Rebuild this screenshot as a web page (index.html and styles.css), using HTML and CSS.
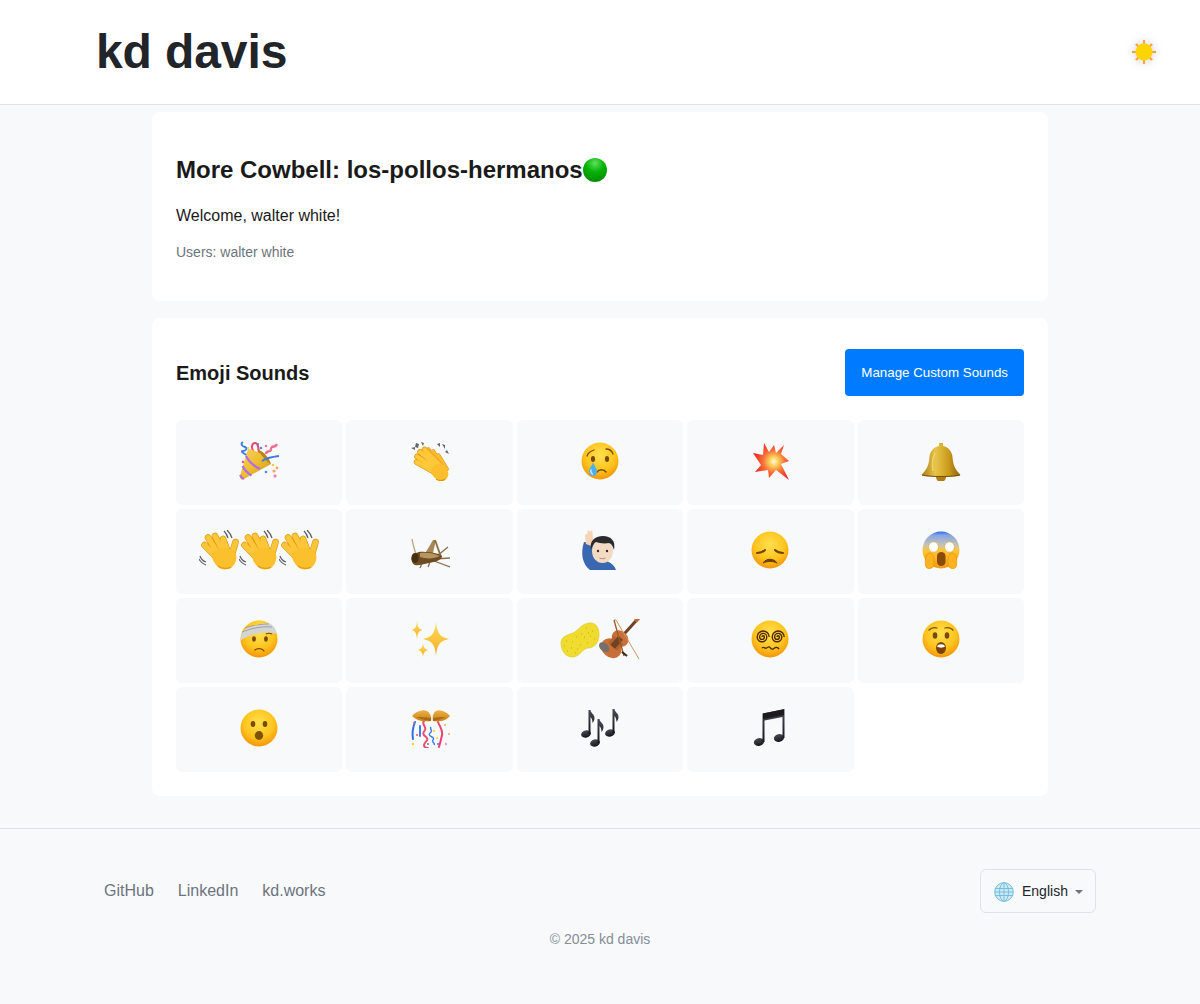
FILE: index.html
```html
<!DOCTYPE html>
<html lang="en">
<head>
    <meta charset="UTF-8">
    <meta name="viewport" content="width=device-width, initial-scale=1.0">
    <title>More Cowbell</title>
    <link rel="stylesheet" href="styles.css">
</head>
<body>
    <!-- shared gradients and emoji drawings -->
    <svg class="sprite" aria-hidden="true">
        <defs>
            <radialGradient id="faceFill" cx="50%" cy="35%" r="68%">
                <stop offset="0" stop-color="#ffe04f"/>
                <stop offset="0.6" stop-color="#fdc41e"/>
                <stop offset="0.92" stop-color="#f59a0c"/>
                <stop offset="1" stop-color="#ec8a0e"/>
            </radialGradient>
            <linearGradient id="screamFill" x1="0" y1="0" x2="0" y2="1">
                <stop offset="0" stop-color="#2a6cec"/>
                <stop offset="0.1" stop-color="#86a4e6"/>
                <stop offset="0.36" stop-color="#c4c2b4"/>
                <stop offset="0.52" stop-color="#fdc532"/>
                <stop offset="1" stop-color="#f39a12"/>
            </linearGradient>
            <linearGradient id="goldFill" x1="0" y1="0" x2="1" y2="1">
                <stop offset="0" stop-color="#f6d264"/>
                <stop offset="0.5" stop-color="#eebd2e"/>
                <stop offset="1" stop-color="#c88c18"/>
            </linearGradient>
            <linearGradient id="bellFill" x1="0" y1="0" x2="1" y2="0">
                <stop offset="0" stop-color="#a8780c"/>
                <stop offset="0.35" stop-color="#e8c54a"/>
                <stop offset="0.7" stop-color="#c99a1c"/>
                <stop offset="1" stop-color="#8c640a"/>
            </linearGradient>
            <linearGradient id="sparkFill" x1="0" y1="0" x2="0" y2="1">
                <stop offset="0" stop-color="#ffdc5a"/>
                <stop offset="1" stop-color="#f7ae26"/>
            </linearGradient>
            <linearGradient id="noteFill" x1="0" y1="0" x2="0" y2="1">
                <stop offset="0" stop-color="#4a4a55"/>
                <stop offset="1" stop-color="#15151c"/>
            </linearGradient>
            <linearGradient id="domeFill" x1="0" y1="0" x2="0" y2="1">
                <stop offset="0" stop-color="#eeb044"/>
                <stop offset="1" stop-color="#c98218"/>
            </linearGradient>
            <radialGradient id="greenFill" cx="50%" cy="22%" r="80%">
                <stop offset="0" stop-color="#5fe05f"/>
                <stop offset="0.45" stop-color="#08b408"/>
                <stop offset="1" stop-color="#048a04"/>
            </radialGradient>
            <radialGradient id="blastFill" cx="58%" cy="50%" r="55%">
                <stop offset="0" stop-color="#fffbe0"/>
                <stop offset="0.22" stop-color="#fdd25a"/>
                <stop offset="0.55" stop-color="#f7703a"/>
                <stop offset="1" stop-color="#ea2a20"/>
            </radialGradient>
        </defs>

        <symbol id="popper" viewBox="0 0 40 40">
            <path d="M4 1c-3 2-1 4 2 5s1 4-2 4 1 3 4 4" fill="none" stroke="#3c7be8" stroke-width="1.900"/>
            <path d="M17 16c-1-4-5-7-4-11s5-4 6 0 1 7 1 11" fill="none" stroke="#f0446c" stroke-width="2"/>
            <path d="M27 13c0-3 2-2 4-3s0-3 2-4 4 0 5-3" fill="none" stroke="#ee6f92" stroke-width="2.400"/>
            <path d="M1 35 9 8c8 1 19 7 23 15L4 38.600c-2 .6-3.500-1.600-3-3.600z" fill="url(#goldFill)"/>
            <path d="M18 8c6 2 12 8 14 15-3-2-6-4-8-7s-5-5-6-8z" fill="#b88418"/>
            <path d="M23 20c4-3 9-4 17-5" fill="none" stroke="#3c7be8" stroke-width="2"/>
            <path d="M7 15c3 6 8 10 14 13M3.500 25c2 4 5 7 9 9.500M1 34c1 2 2 3 4 4" fill="none" stroke="#b56ae8" stroke-width="2.200"/>
            <circle cx="4" cy="21" r="1.300" fill="#e85a80"/>
            <circle cx="22" cy="7" r="1.300" fill="#4a8ae8"/>
            <circle cx="27" cy="5" r="1.300" fill="#ee7a9a"/>
            <circle cx="19" cy="3" r="1" fill="#4a8ae8"/>
            <circle cx="9" cy="7" r="1.100" fill="#f0c84a"/>
            <circle cx="27" cy="31" r="1.300" fill="#4a8ae8"/>
            <circle cx="35" cy="30" r="1.600" fill="#f0a868"/>
            <circle cx="38" cy="27" r="1.400" fill="#f0a868"/>
            <circle cx="36" cy="35" r="1.700" fill="#f08ab0"/>
            <circle cx="34" cy="24" r="1.300" fill="#f0c84a"/>
        </symbol>

        <symbol id="clap" viewBox="0 0 40 40">
            <path d="M1 7l4-1 0 3zM6 2l3 1-1 4-3-1zM11 1l3 1-1 3zM27 3l3-1 0 4zM32 3l3 1 0 4zM37 9l2 4-4-2z" fill="#666"/>
            <g fill="none" stroke-linecap="round">
                <path d="M30 28 18 9M33 28 23 11M36 28 28 15" stroke="#e0920e" stroke-width="5.400"/>
                <path d="M30 28 18 9M33 28 23 11M36 28 28 15" stroke="#f7bc32" stroke-width="4.400"/>
                <path d="M26 32 6.500 21M26 28 7 15.500M28 25 10 11M30 24 14.500 8.500" stroke="#e0920e" stroke-width="5.600"/>
                <path d="M26 32 6.500 21M26 28 7 15.500M28 25 10 11M30 24 14.500 8.500" stroke="#fdc93a" stroke-width="4.400"/>
            </g>
            <path d="M21 28c3-5 8-6 11-5 2 2 4 5 6 8 1 2 0 6-3 8-3 1-6 0-8-1-4-2-7-6-6-10z" fill="#fbbf2e"/>
            <path d="M26 38c3 2 7 2 9 0" fill="none" stroke="#e8960c" stroke-width="1.500"/>
        </symbol>

        <symbol id="wave" viewBox="0 0 40 40">
            <path d="M25 1c2 2 3 4 4 7M28 0c2 2 4 5 5 8M1 26c1 3 3 5 6 6M0 29c1 2 4 5 7 6" fill="none" stroke="#5f5f5f" stroke-width="1.300"/>
            <g fill="none" stroke-linecap="round">
                <path d="M20 30 5.500 15M20 25 9 7.500M25 23 16 6M29 22 24 9M32 28 36.500 12" stroke="#e0920e" stroke-width="6.600"/>
                <path d="M20 30 5.500 15M20 25 9 7.500M25 23 16 6M29 22 24 9M32 28 36.500 12" stroke="#fcc63a" stroke-width="5.400"/>
            </g>
            <path d="M13 23c5-6 18-7 23-1 3 5 1 12-4 16-4 2-10 2-13-1s-7-8-6-14z" fill="#fac02e"/>
            <path d="M19 36c4 3 10 3 13 1" fill="none" stroke="#ea9a10" stroke-width="1.400"/>
        </symbol>

        <symbol id="cry" viewBox="0 0 40 40">
            <circle cx="20" cy="20" r="18.500" fill="url(#faceFill)"/>
            <path d="M7 15c1-3 4-5 7-6M26 8c3 0 6 2 7 5" fill="none" stroke="#7a4a0a" stroke-width="1.300" stroke-linecap="round"/>
            <ellipse cx="13" cy="18" rx="2.100" ry="3" fill="#7a4a0a"/>
            <ellipse cx="27" cy="18" rx="2.100" ry="3" fill="#7a4a0a"/>
            <path d="M17 31c2-3 7-3 9 0" fill="none" stroke="#7a4a0a" stroke-width="1.500" stroke-linecap="round"/>
            <path d="M13 21c-1 4-4 6-4 9.500 0 3 2 4.500 4 4.500s4-1.500 4-4.500c0-3.500-3-5.500-4-9.500z" fill="#4fb0ee"/>
            <path d="M11 29c-.5 2 0 3 1.500 4" fill="none" stroke="#d5f0fd" stroke-width="1.300" stroke-linecap="round"/>
        </symbol>

        <symbol id="blast" viewBox="0 0 40 40">
            <path d="M14 2 19 11 24 4 26 12 34 4 31 13 39 20 31 23 39 39 26 29 19 37 18 29 5 31 11 24 3 12 13 14z" fill="url(#blastFill)"/>
        </symbol>

        <symbol id="bell" viewBox="0 0 40 40">
            <circle cx="20" cy="36" r="5" fill="#b07c14"/>
            <path d="M18 2h4v3c5 1 9 5 9.500 11 .5 8 3 13 8 18-5 2.500-34 2.500-39 0 5-5 7.500-10 8-18C9 10 13 6 18 5z" fill="url(#bellFill)"/>
            <path d="M1 34c6 2 32 2 38 0" fill="none" stroke="#6f4e08" stroke-width="1"/>
            <path d="M12 30c-1-6 0-14 2-18" fill="none" stroke="#f3dc7c" stroke-width="1.500" opacity=".8"/>
        </symbol>

        <symbol id="scream" viewBox="0 0 40 40">
            <circle cx="20" cy="20" r="18.500" fill="url(#screamFill)"/>
            <ellipse cx="12.500" cy="17" rx="5" ry="5.200" fill="#fff" stroke="#d9a23a" stroke-width=".6"/>
            <ellipse cx="28.500" cy="17" rx="5" ry="5.200" fill="#fff" stroke="#d9a23a" stroke-width=".6"/>
            <rect x="16" y="22" width="8.500" height="14" rx="4.200" fill="#8a4a0c"/>
            <path d="M5 26c1-3 5-4 6-2 2 3 3 9 1 13-2 2-6 2-7 0-1-3-1-8 0-11z" fill="#fbb420" stroke="#ea8f10" stroke-width=".7"/>
            <path d="M35 26c-1-3-5-4-6-2-2 3-3 9-1 13 2 2 6 2 7 0 1-3 1-8 0-11z" fill="#fbb420" stroke="#ea8f10" stroke-width=".7"/>
        </symbol>

        <symbol id="cricket" viewBox="0 0 40 40">
            <path d="M2 9c1 5 2 10 4 15" fill="none" stroke="#b8a688" stroke-width="1.300"/>
            <path d="M13 27 23 10 26 10 22 27z" fill="#a5875a"/>
            <path d="M25 10 31 27" fill="none" stroke="#8a6c3e" stroke-width="1.800"/>
            <path d="M27 26 38 17M24 29 40 28M24 31 40 37M13 31 10 38M20 32 18 37" fill="none" stroke="#85704f" stroke-width="1.300"/>
            <path d="M2 27c3-5 8-6 13-5 6 0 13 1 17 4 0 4-7 6-13 7-6 1-11 3-14 2-3-1-4-5-3-8z" fill="#6e4c24"/>
            <path d="M10 23c6-1 14 0 20 3-6 3-14 3-20 1z" fill="#b8955f"/>
            <ellipse cx="5" cy="28" rx="3.600" ry="5" fill="#47300f"/>
        </symbol>

        <symbol id="raise" viewBox="0 0 40 40">
            <path d="M4 12 15 13c-3 6-3 12 0 16 8 0 19 3 21 11H10C3 35 0 24 4 12z" fill="#3a68b0"/>
            <path d="M6 14 5 6c0-2 1-3 2-1l.5-3c.5-2 2-2 2.500 0l.5-1c1-1 2 0 2 1l.5 8c2-1 2 2 0 4l-2 2z" fill="#f5d5b5"/>
            <ellipse cx="22.500" cy="21" rx="10.500" ry="12" fill="#f3dac2"/>
            <path d="M11 20c-2-9 4-14 12-14s13 5 11 14c-1-3-2-6-5-7-5 1-10 0-13-1-2 1-4 4-5 8z" fill="#2b2b2e"/>
            <circle cx="18" cy="21" r="1.200" fill="#3a2a20"/>
            <circle cx="27" cy="21" r="1.200" fill="#3a2a20"/>
            <path d="M19.500 28c2 1 4 1 6 0" fill="none" stroke="#b58a70" stroke-width="1"/>
        </symbol>

        <symbol id="sad" viewBox="0 0 40 40">
            <circle cx="20" cy="20" r="18.500" fill="url(#faceFill)"/>
            <path d="M7 23c3 0 6-1 8-3M33 23c-3 0-6-1-8-3" fill="none" stroke="#6e4208" stroke-width="2" stroke-linecap="round"/>
            <path d="M13 33c3-5 11-5 14 0-4-2-10-2-14 0z" fill="#6e4208" stroke="#6e4208" stroke-width="1" stroke-linejoin="round"/>
        </symbol>

        <symbol id="bandage" viewBox="0 0 40 40">
            <circle cx="20" cy="20" r="18.500" fill="url(#faceFill)"/>
            <path d="M2 21C1 12 8 8 14 7c6-3 14-5 19-1 3 2 4 5 5 9-8-3-24-2-36 6z" fill="#d4d4d4"/>
            <path d="M3 13c8-3 18-6 30-5M6 9c6-2 12-4 24-4" fill="none" stroke="#a0a0a0" stroke-width="1"/>
            <path d="M17 2c4-1 9 0 12 2-5 0-10 1-14 3z" fill="#fcd22e"/>
            <ellipse cx="15" cy="20" rx="1.900" ry="2.800" fill="#7a4a0a"/>
            <ellipse cx="27" cy="20" rx="1.900" ry="2.800" fill="#7a4a0a"/>
            <path d="M27 15c2-1 4-1 6 0" fill="none" stroke="#7a4a0a" stroke-width="1.200"/>
            <path d="M16 31c2-2 7-2 9 1" fill="none" stroke="#7a4a0a" stroke-width="1.300" stroke-linecap="round"/>
        </symbol>

        <symbol id="sparkles" viewBox="0 0 40 40">
            <path d="M26 3c1 10 3 15 13 17-10 2-12 7-13 17-1-10-3-15-13-17 10-2 12-7 13-17z" fill="url(#sparkFill)"/>
            <path d="M7 2c.5 6 1.500 8 5.500 9-4 1-5 3-5.500 9-.5-6-1.500-8-5.500-9 4-1 5-3 5.500-9z" fill="url(#sparkFill)"/>
            <path d="M13 24c.5 4 1.500 6 5 7-3.500 1-4.500 3-5 7-.5-4-1.500-6-5-7 3.500-1 4.500-3 5-7z" fill="url(#sparkFill)"/>
        </symbol>

        <symbol id="spongeviolin" viewBox="0 0 80 40">
            <path d="M1 24C1 17 8 16 13 14 18 12 21 5 29 4c7-1 10 5 10 11 0 9-5 14-11 14-6 1-7 7-14 9C6 39 1 32 1 24z" fill="#efdc2e" stroke="#dcc21e" stroke-width=".6"/>
            <path d="M6 22h1M11 29h1M16 18h1M21 15h1M26 9h1M32 12h1M15 34h1M27 24h1M7 32h1M34 20h1M20 26h1M24 18h1M12 23h1M30 17h1M17 30h1M4 27h1M28 14h1" stroke="#c4ae14" stroke-width="1.200"/>
            <g transform="rotate(42 56 24)">
                <rect x="54.500" y="-6" width="3" height="24" fill="#6e4222"/>
                <ellipse cx="56" cy="31" rx="11" ry="9" fill="#c9703a"/>
                <ellipse cx="56" cy="18" rx="9" ry="7.500" fill="#c9703a"/>
                <rect x="50" y="20" width="12" height="9" fill="#b5622e"/>
                <path d="M53 17h6v12h-6z" fill="#6e4222"/>
                <ellipse cx="50" cy="35" rx="6" ry="4" fill="#77706a"/>
                <rect x="54" y="-10" width="4" height="5" rx="1" fill="#c06a34"/>
            </g>
            <path d="M54 1h2l23 39" fill="none" stroke="#cf9460" stroke-width="1"/>
            <path d="M54 1 64 37" fill="none" stroke="#9a5a2a" stroke-width="1.300"/>
            <path d="M62 33l5 4" stroke="#3e2c1e" stroke-width="2.200"/>
        </symbol>

        <symbol id="dizzy" viewBox="0 0 40 40">
            <circle cx="20" cy="20" r="18.500" fill="url(#faceFill)"/>
            <g fill="none" stroke="#4d2a05" stroke-width="1.400">
                <path d="M12 18a1.200 1.200 0 0 1 2.400 0a2.400 2.400 0 0 1-4.800 0a3.600 3.600 0 0 1 7.200 0a4.800 4.800 0 0 1-9.600 0a6 6 0 0 1 12 0"/>
                <path d="M27 18a1.200 1.200 0 0 1 2.400 0a2.400 2.400 0 0 1-4.800 0a3.600 3.600 0 0 1 7.200 0a4.800 4.800 0 0 1-9.600 0a6 6 0 0 1 12 0"/>
                <path d="M12 29c2-2 3 1 4.500 0s3-2 4 0 3 1 4 0 3-1 4.500 1"/>
            </g>
        </symbol>

        <symbol id="astonished" viewBox="0 0 40 40">
            <circle cx="20" cy="20" r="18.500" fill="url(#faceFill)"/>
            <path d="M8 11c2-2 5-3 8-2M24 9c3-1 6 0 8 2" fill="none" stroke="#7a4a0a" stroke-width="1.300" stroke-linecap="round"/>
            <ellipse cx="14" cy="16.500" rx="2.300" ry="3.300" fill="#7a4a0a"/>
            <ellipse cx="26" cy="16.500" rx="2.300" ry="3.300" fill="#7a4a0a"/>
            <ellipse cx="20" cy="29" rx="5" ry="6" fill="#7a4208"/>
            <path d="M16 27.500c1-3 7-3 8 0-2 1.500-6 1.500-8 0z" fill="#fff"/>
        </symbol>

        <symbol id="hushed" viewBox="0 0 40 40">
            <circle cx="20" cy="20" r="18.500" fill="url(#faceFill)"/>
            <ellipse cx="14" cy="16" rx="2.300" ry="3" fill="#7a4a0a"/>
            <ellipse cx="26" cy="16" rx="2.300" ry="3" fill="#7a4a0a"/>
            <ellipse cx="20" cy="27.500" rx="4.200" ry="4.400" fill="#7f5008"/>
        </symbol>

        <symbol id="confetti" viewBox="0 0 40 40">
            <path d="M5 14c-2 5-3 11-2 17" fill="none" stroke="#2f6fe8" stroke-width="2" stroke-linecap="round"/>
            <path d="M14 13c-3 3 3 6 1 9s-3 4 1 7-2 5-2 8 2 3 4 3" fill="none" stroke="#ef4c74" stroke-width="2" stroke-linecap="round"/>
            <path d="M21 19c-2 2 2 3 0 5s-3 3 1 5-1 3 1 5 1 3 1 3" fill="none" stroke="#3c7be8" stroke-width="1.400"/>
            <path d="M28 14c2 5 5 8 4 13s-2 8-3 12" fill="none" stroke="#ef3f6a" stroke-width="2" stroke-linecap="round"/>
            <path d="M10 18v10" stroke="#2f6fe8" stroke-width="1.800" stroke-linecap="round"/>
            <circle cx="4" cy="15" r="1" fill="#ef5c82"/>
            <circle cx="7" cy="27" r="1" fill="#ef4c74"/>
            <circle cx="3" cy="36" r="1.200" fill="#f7d02e"/>
            <circle cx="18" cy="36" r="1" fill="#3c7be8"/>
            <circle cx="27" cy="30" r="1" fill="#f7d02e"/>
            <circle cx="28" cy="36" r="1" fill="#3c7be8"/>
            <circle cx="35" cy="17" r="1" fill="#f0a868"/>
            <circle cx="39" cy="26" r="1" fill="#f0a868"/>
            <circle cx="36" cy="36" r="1.200" fill="#f09ac0"/>
            <circle cx="24" cy="23" r="1" fill="#f7d02e"/>
            <path d="M2 8C6 3 13 1 17 3c3 2 5 6 4 10C15 14 7 13 2 8z" fill="url(#domeFill)"/>
            <path d="M40 8C36 3 29 1 26 3c-3 2-4 6-3 10 6 1 13 0 17-5z" fill="url(#domeFill)"/>
            <path d="M6 9c4 2 10 3 15 4 0-1 0-2 0-3-5-1-10-1-15-1zM36 9c-4 2-9 3-13 4 0-1 0-2 0-3 4-1 9-1 13-1z" fill="#a86c14"/>
        </symbol>

        <symbol id="notes" viewBox="0 0 40 40">
            <g fill="url(#noteFill)">
                <ellipse cx="6" cy="26" rx="5" ry="3.500" transform="rotate(-15 6 26)"/>
                <path d="M8.500 2h2c0 3 4 4 4 8 0 2-1 4-2 5 0-3-1-5-2-6v17h-2z"/>
                <ellipse cx="15" cy="35" rx="5" ry="3.500" transform="rotate(-15 15 35)"/>
                <path d="M17.500 11h2c0 3 4 4 4 8 0 2-1 4-2 5 0-3-1-5-2-6v17h-2z"/>
                <ellipse cx="30" cy="25" rx="5" ry="3.500" transform="rotate(-15 30 25)"/>
                <path d="M32.500 1h2c0 3 4 4 4 8 0 2-1 4-2 5 0-3-1-5-2-6v17h-2z"/>
            </g>
        </symbol>

        <symbol id="note" viewBox="0 0 40 40">
            <g fill="url(#noteFill)">
                <ellipse cx="9" cy="34" rx="5.200" ry="3.800" transform="rotate(-15 9 34)"/>
                <ellipse cx="29" cy="30" rx="5.200" ry="3.800" transform="rotate(-15 29 30)"/>
                <path d="M12.500 5.500 34.500 1v29h-2V9L14.500 12.500V34h-2z"/>
            </g>
            <path d="M13 5.500 34 1.200v5.800L13 11z" fill="#1d1a1e"/>
        </symbol>
    </svg>

    <header class="site-header">
        <h1 class="site-title">kd davis</h1>
        <button class="theme-toggle" aria-label="Toggle theme">
            <svg class="sun" viewBox="0 0 28 28" width="28" height="28">
                <g stroke="#ffa43a" stroke-width="2">
                    <path d="M14 2v5M14 21v5M2 14h5M21 14h5"/>
                    <path d="M6 6l3 3M22 6l-3 3M6 22l3-3M22 22l-3-3" stroke-width="2.400"/>
                </g>
                <circle cx="14" cy="14" r="8.400" fill="#ffd400"/>
            </svg>
        </button>
    </header>

    <main class="content">
        <section class="card room-card">
            <h2 class="room-title">More Cowbell: los-pollos-hermanos<svg class="status-dot" viewBox="0 0 24 24" width="24" height="24"><circle cx="12" cy="12" r="12" fill="url(#greenFill)"/></svg></h2>
            <p class="welcome">Welcome, walter white!</p>
            <p class="users">Users: walter white</p>
        </section>

        <section class="card sounds-card">
            <div class="sounds-head">
                <h3 class="sounds-title">Emoji Sounds</h3>
                <button class="manage-btn">Manage Custom Sounds</button>
            </div>
            <div class="sound-grid">
                <button class="sound"><svg class="emoji"><use href="#popper"/></svg></button>
                <button class="sound"><svg class="emoji"><use href="#clap"/></svg></button>
                <button class="sound"><svg class="emoji"><use href="#cry"/></svg></button>
                <button class="sound"><svg class="emoji"><use href="#blast"/></svg></button>
                <button class="sound"><svg class="emoji"><use href="#bell"/></svg></button>
                <button class="sound"><svg class="emoji"><use href="#wave"/></svg><svg class="emoji"><use href="#wave"/></svg><svg class="emoji"><use href="#wave"/></svg></button>
                <button class="sound"><svg class="emoji"><use href="#cricket"/></svg></button>
                <button class="sound"><svg class="emoji"><use href="#raise"/></svg></button>
                <button class="sound"><svg class="emoji"><use href="#sad"/></svg></button>
                <button class="sound"><svg class="emoji"><use href="#scream"/></svg></button>
                <button class="sound"><svg class="emoji"><use href="#bandage"/></svg></button>
                <button class="sound"><svg class="emoji"><use href="#sparkles"/></svg></button>
                <button class="sound"><svg class="emoji emoji-wide"><use href="#spongeviolin"/></svg></button>
                <button class="sound"><svg class="emoji"><use href="#dizzy"/></svg></button>
                <button class="sound"><svg class="emoji"><use href="#astonished"/></svg></button>
                <button class="sound"><svg class="emoji"><use href="#hushed"/></svg></button>
                <button class="sound"><svg class="emoji"><use href="#confetti"/></svg></button>
                <button class="sound"><svg class="emoji"><use href="#notes"/></svg></button>
                <button class="sound"><svg class="emoji"><use href="#note"/></svg></button>
            </div>
        </section>
    </main>

    <footer class="site-footer">
        <div class="footer-row">
            <nav class="footer-links">
                <a href="#">GitHub</a>
                <a href="#">LinkedIn</a>
                <a href="#">kd.works</a>
            </nav>
            <div class="lang-select">
                <svg class="globe" viewBox="0 0 20 20" width="20" height="20">
                    <circle cx="10" cy="10" r="9.500" fill="#cfe9f5"/>
                    <g fill="none" stroke="#74bfdc" stroke-width="1">
                        <circle cx="10" cy="10" r="9.300"/>
                        <ellipse cx="10" cy="10" rx="4.500" ry="9.300"/>
                        <path d="M10 .7v18.600M1 6.500h18M.7 10h18.600M1 13.500h18"/>
                    </g>
                </svg>
                <span class="lang-name">English</span>
                <span class="caret"></span>
            </div>
        </div>
        <p class="copyright">© 2025 kd davis</p>
    </footer>
</body>
</html>
```

FILE: styles.css
```css
* {
    box-sizing: border-box;
}

body {
    margin: 0;
    font-family: "Liberation Sans", Arial, sans-serif;
    background-color: #f8f9fa;
    color: #212529;
}

h1, h2, h3, p {
    margin: 0;
}

button {
    font-family: inherit;
    border: 0;
    cursor: pointer;
}

.sprite {
    position: absolute;
    width: 0;
    height: 0;
}

/* header */
.site-header {
    display: flex;
    align-items: center;
    justify-content: space-between;
    height: 105px;
    padding: 0 42px 0 96px;
    background-color: #fff;
    border-bottom: 1px solid #dee2e6;
}

.site-title {
    font-size: 48px;
    font-weight: 700;
    line-height: 1;
    letter-spacing: -0.1px;
    color: #212529;
}

.theme-toggle {
    display: flex;
    padding: 0;
    background: none;
}

.sun {
    filter: drop-shadow(0 0 5px rgba(0, 0, 0, 0.2));
}

/* cards */
.content {
    width: 896px;
    margin: 0 auto;
    padding: 7px 0 32px;
}

.card {
    background-color: #fff;
    border-radius: 8px;
    padding: 24px;
}

.room-card {
    height: 189px;
    padding-top: 44px;
    margin-bottom: 17px;
}

.room-title {
    display: flex;
    align-items: center;
    height: 28px;
    font-size: 24px;
    font-weight: 700;
    color: #1a1a1a;
}

.welcome {
    margin-top: 22px;
    font-size: 16px;
    line-height: 20px;
    color: #1a1a1a;
}

.users {
    margin-top: 18px;
    font-size: 14px;
    line-height: 16px;
    color: #6c757d;
}

.sounds-card {
    padding-top: 31px;
}

.sounds-head {
    display: flex;
    align-items: center;
    justify-content: space-between;
    margin-bottom: 24px;
}

.sounds-title {
    padding-top: 2px;
    font-size: 20px;
    font-weight: 700;
    color: #1a1a1a;
}

.manage-btn {
    height: 47px;
    padding: 0 16px;
    font-size: 13.333px;
    color: #fff;
    background-color: #007bff;
    border-radius: 4px;
}

/* emoji grid */
.sound-grid {
    display: grid;
    grid-template-columns: repeat(5, 1fr);
    grid-auto-rows: 85px;
    gap: 4px;
}

.sound {
    display: flex;
    align-items: center;
    justify-content: center;
    padding: 0 0 3px;
    background-color: #f8f9fa;
    border-radius: 6px;
}

.emoji {
    width: 40px;
    height: 40px;
    flex-shrink: 0;
}

.emoji-wide {
    width: 80px;
}

/* footer */
.site-footer {
    height: 176px;
    padding: 40px 104px 0;
    border-top: 1px solid #dee2e6;
}

.footer-row {
    display: flex;
    align-items: center;
    justify-content: space-between;
}

.footer-links {
    display: flex;
    gap: 24px;
}

.footer-links a {
    font-size: 16px;
    color: #6c757d;
    text-decoration: none;
}

.lang-select {
    display: flex;
    align-items: center;
    width: 116px;
    height: 44px;
    padding: 0 12px 0 13px;
    background-color: #f8f9fa;
    border: 1px solid #dee2e6;
    border-radius: 6px;
}

.globe {
    margin: 2px 8px 0 0;
}

.lang-name {
    font-size: 14px;
    color: #212529;
}

.caret {
    margin: 2px 0 0 auto;
    border-top: 4px solid #6c757d;
    border-left: 4px solid transparent;
    border-right: 4px solid transparent;
}

.copyright {
    margin-top: 18px;
    font-size: 14px;
    text-align: center;
    color: #868e96;
}
```
